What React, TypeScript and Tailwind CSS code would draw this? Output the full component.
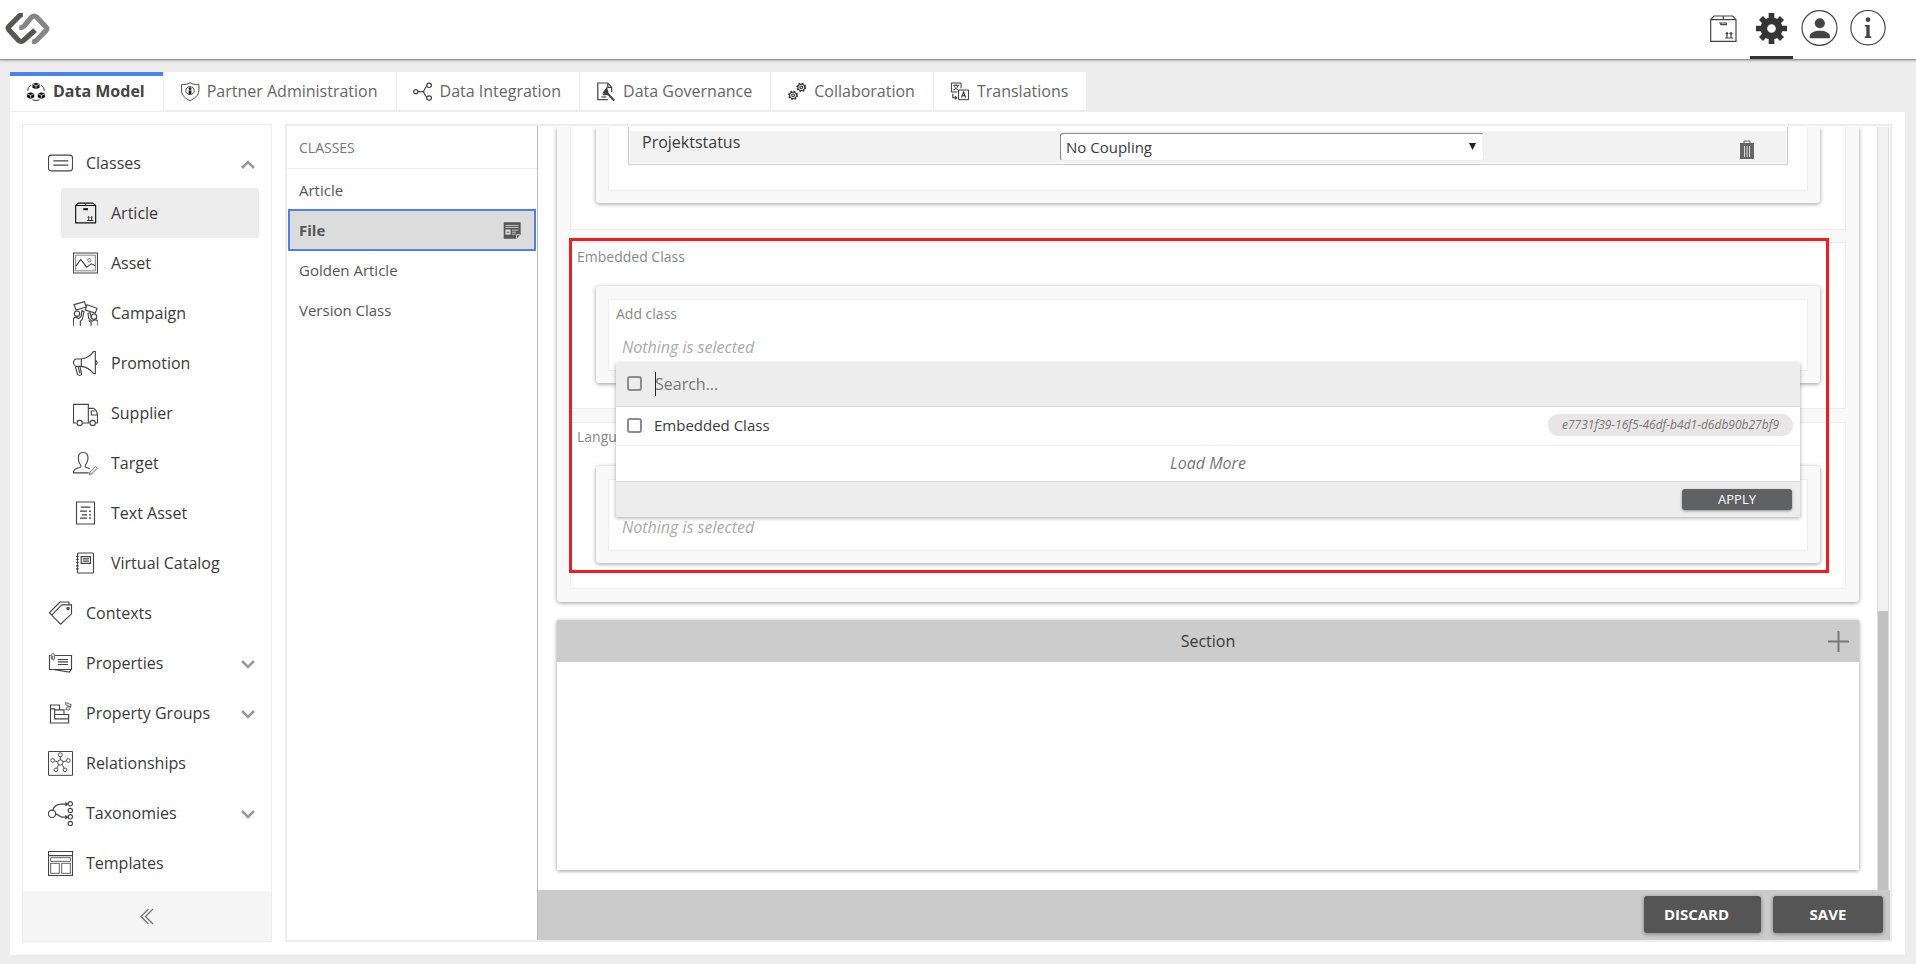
import type { ReactNode } from "react";

type IconProps = { box: string; children: ReactNode; className?: string; stroke?: string; width?: number };

function Icon({ box, children, className = "size-[25px]", stroke = "#444", width = 3.4 }: IconProps) {
  return (
    <svg viewBox={box} preserveAspectRatio="none" className={`${className} shrink-0`} fill="none" stroke={stroke} strokeWidth={width} aria-hidden="true">
      {children}
    </svg>
  );
}

function Logo() {
  return (
    <svg viewBox="14 38 126 94" preserveAspectRatio="none" className="h-[31px] w-[45px]" fill="none" strokeLinejoin="round" strokeWidth="15" aria-hidden="true">
      <path d="M64 43Q57 43 53 48L25 79Q21 84 25 89L52 121Q59 127 66 121L98 90" stroke="#555653" />
      <path d="M54 83Q62 83 67 78L88 51Q95 44 102 50L129 81Q133 86 129 91L102 121Q97 126 90 126" stroke="#858585" />
      <path d="M71 45 43 76M81 125 111 92" stroke="#fff" strokeWidth="3" />
    </svg>
  );
}

const boxIcon = (
  <>
    <path d="M227 255 235 248H278L287 255V307H227ZM227 255H287M257 248V255" />
    <path d="M250 266H264" strokeWidth="6" />
    <path d="M262 300H280M266 300V289M275 300V289M263 291 266 288 269 291M272 291 275 288 278 291" strokeWidth="2.5" />
  </>
);

const topNav = [
  {
    name: "Articles",
    active: false,
    icon: (
      <Icon box="148 47 81 81" className="size-[27px]" width={3.6}>
        <path d="M150 61 160 50H216L226 61V126H150ZM150 61H226M188 50V61" />
        <path d="M178 71H197V76H181Z" />
        <path d="M193 116H217M199 115V101M211 115V101M195 104 199 100 203 104M207 104 211 100 215 104" />
      </Icon>
    ),
  },
  {
    name: "Settings",
    active: true,
    icon: (
      <Icon box="288 39 93 93" className="size-[31px]" stroke="#353535" width={17}>
        <circle cx="334.500" cy="85.500" r="23" strokeWidth="20" />
        <path d="M334.500 39V57M334.500 114V132M288 85.500H306M363 85.500H381M303 54 314 65M355 106 366 117M303 117 314 106M355 65 366 54" />
      </Icon>
    ),
  },
  {
    name: "Account",
    active: false,
    icon: (
      <Icon box="424 29 110 108" className="h-9 w-[37px]">
        <circle cx="479" cy="83" r="52" />
        <circle cx="480" cy="69" r="15" fill="#444" stroke="none" />
        <path d="M450 114V108C450 97 465 91 480 91S510 97 510 108V114Z" fill="#444" stroke="none" />
      </Icon>
    ),
  },
  {
    name: "Information",
    active: false,
    icon: (
      <Icon box="573 28 108 108" className="size-9">
        <circle cx="627" cy="81" r="51.500" />
        <circle cx="627" cy="57" r="7" fill="#444" stroke="none" />
        <path d="M617 73H632V106L637 108V112H617V108L622 106V78L617 76Z" fill="#444" stroke="none" />
      </Icon>
    ),
  },
];

function Cube({ x, y }: { x: number; y: number }) {
  return (
    <g transform={`translate(${x} ${y})`}>
      <path d="M0-10 10-6V5L0 10-10 5V-6Z" fill="#111" stroke="none" />
      <path d="M-9-5 0-1 9-5M0-1V9" stroke="#fff" strokeWidth="2" />
    </g>
  );
}

function Cog({ x, y }: { x: number; y: number }) {
  return (
    <g transform={`translate(${x} ${y})`}>
      <circle r="11.500" strokeWidth="5" strokeDasharray="5 4" />
      <circle r="9.500" strokeWidth="3" />
      <circle r="4" strokeWidth="3" />
    </g>
  );
}

const tabIcon = "h-[19px] w-5";

const tabs = [
  {
    name: "Data Model",
    active: true,
    icon: (
      <Icon box="70 244 56 57" className={tabIcon} stroke="#111" width={2.5}>
        <path d="M84 253C78 257 75 263 75 270M112 253C118 257 121 263 121 270M88 297C94 300 102 300 108 297" />
        <Cube x={98} y={256} />
        <Cube x={83} y={285} />
        <Cube x={113} y={285} />
      </Icon>
    ),
  },
  {
    name: "Partner Administration",
    active: false,
    icon: (
      <Icon box="495 244 56 57" className={tabIcon} width={2.8}>
        <path d="M523 246C516 251 508 252 499 252V270C500 285 511 294 523 300 535 294 547 285 548 270V252C539 252 530 251 523 246Z" />
        <circle cx="523" cy="270" r="12" />
        <circle cx="523" cy="264" r="4" fill="#222" stroke="none" />
        <path d="M519 269H527V280H519Z" fill="#222" stroke="none" />
      </Icon>
    ),
  },
  {
    name: "Data Integration",
    active: false,
    icon: (
      <Icon box="1152 244 56 57" className={tabIcon}>
        <circle cx="1160" cy="273" r="6" />
        <circle cx="1197" cy="254" r="6.500" />
        <circle cx="1197" cy="292" r="6.500" />
        <path d="M1166 273H1179M1191 257C1183 261 1186 272 1179 273 1186 274 1183 285 1191 289" />
      </Icon>
    ),
  },
  {
    name: "Data Governance",
    active: false,
    icon: (
      <Icon box="157 65 56 57" className={tabIcon}>
        <path d="M201 96V81L190 68H162V118H190M190 68V81H201" />
        <path d="M187 83 177 98 191 100ZM176 103H193" fill="#333" />
        <path d="M190 100 208 121" strokeWidth="6" />
        <path d="M172 110H186" />
      </Icon>
    ),
  },
  {
    name: "Collaboration",
    active: false,
    icon: (
      <Icon box="694 64 56 57" className={tabIcon} stroke="#333">
        <Cog x={734} y={80} />
        <Cog x={711} y={104} />
      </Icon>
    ),
  },
  {
    name: "Translations",
    active: false,
    icon: (
      <Icon box="1151 65 56 57" className={tabIcon} stroke="#333" width={2.8}>
        <path d="M1182 84V68H1155V95H1172M1175 89H1203V118H1175Z" />
        <path d="M1160 75H1177M1168 72V75M1174 76C1171 83 1166 87 1160 89M1163 78C1166 84 1171 88 1175 89" />
        <path d="M1183 112 1189 95 1195 112M1185 106H1193M1159 100V112H1170M1165 107 1170 112 1165 117" strokeWidth="3" />
      </Icon>
    ),
  },
];

type NavItem = { name: string; icon: ReactNode; chevron?: "up" | "down"; nested?: boolean; active?: boolean };

const navItems: NavItem[] = [
  {
    name: "Classes",
    chevron: "up",
    icon: (
      <Icon box="144 91.5 75 75">
        <rect x="145.500" y="104" width="72" height="47" rx="8" />
        <path d="M160 121H205M160 134H205" />
      </Icon>
    ),
  },
  {
    name: "Article",
    nested: true,
    active: true,
    icon: (
      <Icon box="219 241.5 75 75" stroke="#111">
        {boxIcon}
      </Icon>
    ),
  },
  {
    name: "Asset",
    nested: true,
    icon: (
      <Icon box="219 391.5 75 75">
        <path d="M220.500 397.500H292.500V457.500H220.500Z" />
        <path d="M227 404H286V451H227Z" strokeWidth="2" />
        <path d="M228 437 242 417 260 440 274 430 286 436" />
        <circle cx="268" cy="419" r="5" strokeWidth="2" />
      </Icon>
    ),
  },
  {
    name: "Campaign",
    nested: true,
    icon: (
      <Icon box="219 540 75 75">
        <path d="M222 551 253 542 259 558 228 567ZM261 551 291 562 286 576 256 567Z" />
        <circle cx="231" cy="578" r="8" />
        <circle cx="282" cy="587" r="8" />
        <path d="M220 614V593C223 588 229 588 235 593L243 587 246 569 252 572 247 595 241 601V614M294 614V601C290 595 282 597 276 601L266 592 264 577 270 575 274 590M266 598 273 604V614" />
      </Icon>
    ),
  },
  {
    name: "Promotion",
    nested: true,
    icon: (
      <Icon box="219 690 75 75">
        <path d="M244 714H228C218 716 218 732 228 736H244ZM244 714C262 712 271 705 281 691H286V758H281C271 745 262 738 244 736M286 718C293 720 293 730 286 732M226 737 233 761C236 764 242 763 245 760L240 737M234 737 240 757" />
      </Icon>
    ),
  },
  {
    name: "Supplier",
    nested: true,
    icon: (
      <Icon box="219 -30 75 75">
        <path d="M229 36H220.500V-20H265V36H247M265 -8H280C287 -7 292 5 292.500 14V36H287M268 36H265M292 12H274V0H284" />
        <circle cx="239" cy="36" r="8" />
        <circle cx="278" cy="36" r="8" />
      </Icon>
    ),
  },
  {
    name: "Target",
    nested: true,
    icon: (
      <Icon box="219 121.500 75 75">
        <path d="M266 187H220.500C220 180 224 176 229 174L239 171C245 169 243 165 239 159 236 154 235 149 235 143 235 132 240 126 249 126S264 132 264 143C264 149 262 154 259 159 255 165 254 169 259 171L270 174" />
        <path d="M270 185 287 168 292 173 275 190 268 192Z" strokeWidth="2.500" />
      </Icon>
    ),
  },
  {
    name: "Text Asset",
    nested: true,
    icon: (
      <Icon box="219 271.500 75 75">
        <path d="M229.500 274.500H283.500V340.500H229.500Z" />
        <path d="M242 290H271M240 302H261M246 313H261M240 323H261M267 302H273M267 313H273M267 323H273" />
      </Icon>
    ),
  },
  {
    name: "Virtual Catalog",
    nested: true,
    icon: (
      <Icon box="219 421.500 75 75">
        <rect x="232.500" y="427.500" width="48" height="60" rx="3" />
        <path d="M243.500 438.500H271.500V458.500H243.500ZM248 445H267M248 452H267M228 438H236M228 447H236M228 456H236M228 466H236M228 475H236" />
      </Icon>
    ),
  },
  {
    name: "Contexts",
    icon: (
      <Icon box="144 571.500 75 75">
        <path d="M185 583H214.500V610L182 641 148 607 180 574.500H207V583M185 583 156 613" />
        <circle cx="204" cy="594" r="3.500" fill="#777" />
      </Icon>
    ),
  },
  {
    name: "Properties",
    icon: (
      <Icon box="144 721.500 75 75">
        <path d="M165 735H214.500V777H148.500V735H152M160 777 208 785 213 778M174 747H204M174 754H204M174 762H204" />
        <path d="M155 747V732C156 728 162 728 163 732V746C161 749 158 749 158 746V736" strokeWidth="2.500" />
      </Icon>
    ),
  },
  {
    name: "Property Groups",
    icon: (
      <Icon box="144 31.500 75 75">
        <path d="M151.500 97.500V43.500H178.500V58H192V72H206V97.500ZM151 55H164V85H206M164 72H192M164 58H178" />
        <path d="M197 36 214 43 211 49 197 43ZM201 50 212 48 207 59 197 57Z" strokeWidth="2.500" />
      </Icon>
    ),
  },
  {
    name: "Relationships",
    icon: (
      <Icon box="144 181.500 75 75" width={2.8}>
        <path d="M145.500 183H217.500V254.500H145.500Z" strokeWidth="3" />
        <circle cx="181" cy="216" r="8" />
        <circle cx="181" cy="193" r="6" />
        <circle cx="158" cy="210" r="5.500" />
        <circle cx="205" cy="210" r="5.500" />
        <circle cx="168" cy="238" r="5.500" />
        <circle cx="195" cy="238" r="5.500" />
        <path d="M181 199V208M164 211 173 214M199 211 189 214M171 233 176 223M192 233 187 223" />
      </Icon>
    ),
  },
  {
    name: "Taxonomies",
    chevron: "down",
    icon: (
      <Icon box="144 329.500 75 75">
        <circle cx="156" cy="368" r="11" />
        <path d="M158 357C163 343 172 339 184 339H203M166 368C176 369 178 378 190 378H203M196 334 203 339 196 344M196 373 203 378 196 383" />
        <circle cx="211" cy="338" r="6.500" />
        <circle cx="211" cy="358" r="6.500" />
        <circle cx="211" cy="377" r="6.500" />
        <circle cx="211" cy="397" r="6.500" />
      </Icon>
    ),
  },
  {
    name: "Templates",
    icon: (
      <Icon box="144 480 75 75">
        <path d="M145.500 481.500H217.500V553.500H145.500ZM145 494H218" />
        <path d="M152 500H211V511H152ZM152 517H178V547H152ZM185 517H211V547H185Z" strokeWidth="2.500" />
      </Icon>
    ),
  },
];

const expandable = ["Properties", "Property Groups", "Taxonomies"];

function Chevron({ up }: { up: boolean }) {
  return (
    <svg viewBox="0 0 14 9" className="mt-0.5 h-[9px] w-3.5" fill="none" stroke="#999" strokeWidth="2.600" aria-hidden="true">
      <path d={up ? "M1 8 7 2 13 8" : "M1 1 7 7 13 1"} />
    </svg>
  );
}

function Sidebar() {
  return (
    <nav className="flex w-[250px] shrink-0 flex-col border border-[#ededed]">
      <ul className="flex flex-1 flex-col pt-[13px]">
        {navItems.map((item) => (
          <li key={item.name} className={item.nested ? "pr-3 pl-[38px]" : "pr-4 pl-[25px]"}>
            <a
              href="#"
              className={`flex h-[50px] items-center gap-[13px] rounded-[3px] ${item.nested ? "pl-3" : ""} ${item.active ? "bg-[#ededed]" : ""}`}
            >
              {item.icon}
              <span className="flex-1">{item.name}</span>
              {item.chevron === "up" && <Chevron up />}
              {expandable.includes(item.name) && <Chevron up={false} />}
            </a>
          </li>
        ))}
      </ul>
      <button type="button" aria-label="Collapse sidebar" className="flex h-[50px] items-center justify-center bg-[#f5f5f5]">
        <svg viewBox="0 0 14 17" className="h-[17px] w-3.5" fill="none" stroke="#777" strokeWidth="1.400" aria-hidden="true">
          <path d="M8.500 1 1 8.500 8.500 16M13 1 5.500 8.500 13 16" />
        </svg>
      </button>
    </nav>
  );
}

function ClassList() {
  return (
    <section className="flex w-[251px] shrink-0 flex-col border-r border-[#bbb] text-[15px]">
      <h2 className="flex h-[43px] items-center border-b border-[#ededed] pt-0.5 pl-3 text-sm text-[#777]">CLASSES</h2>
      <ul className="flex flex-col pt-px text-[#555]">
        {["Article", "File", "Golden Article", "Version Class"].map((name) =>
          name === "File" ? (
            <li key={name} className="h-10 px-px">
              <a href="#" className="-my-px flex h-[42px] items-center justify-between border-2 border-[#4f80ee] bg-[#dcdcdc] pr-[13px] pl-[9px] font-bold">
                File
                <Icon box="700 335 52 50" className="h-[17px] w-[18px]" stroke="#555">
                  <path d="M702 336H751V371L739 384H702Z" fill="#555" stroke="none" />
                  <path d="M707 345H745M707 351H745M726 359H745M726 365H738M726 371H736" stroke="#ddd" strokeWidth="2.500" />
                  <path d="M707 357H722V372H707Z" fill="#ddd" stroke="none" />
                  <path d="M711 365H718" />
                  <path d="M739 383V372H750" stroke="#ddd" strokeWidth="2.500" />
                </Icon>
              </a>
            </li>
          ) : (
            <li key={name}>
              <a href="#" className="flex h-10 items-center pl-3">
                {name}
              </a>
            </li>
          ),
        )}
      </ul>
    </section>
  );
}

function CouplingTable() {
  return (
    <div className="border border-t-0 border-[#ccc] p-px pt-1">
      <table className="w-full table-fixed border-collapse bg-[#f2f2f2]">
        <colgroup>
          <col className="w-[37.2%]" />
          <col className="w-[36.7%]" />
          <col />
        </colgroup>
        <tbody>
          <tr className="h-8">
            <td className="pb-2.5 pl-3 align-middle leading-5">
              <label htmlFor="coupling">Projektstatus</label>
            </td>
            <td>
              <div className="relative">
                <select
                  id="coupling"
                  className="block h-7 w-full appearance-none rounded-[3px] border border-t-[#888] border-r-[#eee] border-b-[#eee] border-l-[#888] bg-white pl-[5px] text-[15px]"
                >
                  <option>No Coupling</option>
                </select>
                <svg viewBox="0 0 8 8" className="pointer-events-none absolute top-2.5 right-2 size-[7px]" fill="#222" aria-hidden="true">
                  <path d="M0 0H8L4 8Z" />
                </svg>
              </div>
            </td>
            <td className="pr-[31px]">
              <button type="button" aria-label="Delete" className="ml-auto block pt-1.5">
                <svg viewBox="0 0 16 20" className="h-5 w-4" fill="none" stroke="#666" aria-hidden="true">
                  <path d="M1 3H15V19H1Z" fill="#666" stroke="none" />
                  <path d="M5 3V1H11V3" />
                  <path d="M5.500 6V17M8 6V17M10.500 6V17" stroke="#ddd" />
                </svg>
              </button>
            </td>
          </tr>
        </tbody>
      </table>
    </div>
  );
}

const checkbox = "size-[15px] shrink-0 appearance-none rounded-[3px] border-2 border-[#8c8c8c] bg-transparent";

function ClassDropdown() {
  return (
    <div className="absolute inset-x-0 top-full z-10 bg-white shadow-[0_1px_4px_rgba(0,0,0,0.35)]">
      <div className="flex h-11 items-center border-b border-[#d8d8d8] bg-[#ededed] pb-0.5 pl-[11px]">
        <input type="checkbox" aria-label="Select all" className={checkbox} />
        <div className="relative ml-3 flex-1">
          <input type="text" aria-label="Search" placeholder="Search..." className="block w-full bg-transparent pl-px text-base leading-6 placeholder:text-[#777]" />
          <span className="absolute inset-y-0 left-px w-px bg-[#222]" />
        </div>
      </div>
      <div className="flex h-[39px] items-center border-b border-[#ededed] pr-[7px] pb-0.5 pl-[11px]">
        <input id="embedded" type="checkbox" className={checkbox} />
        <label htmlFor="embedded" className="ml-3 flex-1 text-[15px]">
          Embedded Class
        </label>
        <span className="rounded-full bg-[#e8e6e6] px-3.5 text-xs leading-[22px] text-[#777] italic">e7731f39-16f5-46df-b4d1-d6db90b27bf9</span>
      </div>
      <button type="button" className="flex h-9 w-full items-center justify-center border-b border-[#d8d8d8] pb-0.5 text-[#777] italic">
        Load More
      </button>
      <div className="flex h-[35px] items-center justify-end bg-[#ededed] pr-2">
        <button type="button" className="h-[21px] w-[110px] rounded-[3px] bg-[#606165] text-[13px] leading-[21px] text-white shadow-[0_1px_3px_rgba(0,0,0,0.4)]">
          APPLY
        </button>
      </div>
    </div>
  );
}

const cardShadow = "shadow-[0_1px_4px_rgba(0,0,0,0.4)]";

function Panel({ title, label, children }: { title: string; label?: string; children?: ReactNode }) {
  return (
    <div className="border border-[#ededed] bg-white px-[25px] pb-[25px]">
      <h3 className="-ml-[19px] h-[43px] pt-1 text-sm leading-5 text-[#888]">{title}</h3>
      <div className={`rounded-[3px] bg-[#f9f9f9] px-3 pt-[13px] pb-3 ${cardShadow}`}>
        <div className="border border-[#ededed] bg-white px-[7px] pt-1 pb-[7px]">
          <div className="relative">
            <div className="h-[27px] text-sm leading-5 text-[#888]">{label}</div>
            <div className="pl-1.5 leading-8 text-[#aaa] italic">Nothing is selected</div>
            {children}
          </div>
        </div>
      </div>
    </div>
  );
}

function Content() {
  return (
    <div className="flex min-w-0 flex-1 flex-col">
      <div className="flex min-h-0 flex-1 overflow-hidden pt-px pr-px">
        <div className="flex min-w-0 flex-1 flex-col overflow-hidden pr-[18px] pl-[19px]">
          <div className={`rounded-b-[3px] bg-[#f9f9f9] px-[13px] pb-[13px] ${cardShadow}`}>
            <div className="mb-3 border border-t-0 border-[#ededed] bg-white px-[25px] pb-[26px]">
              <div className={`rounded-b-[3px] bg-[#f9f9f9] px-3 pb-3 ${cardShadow}`}>
                <div className="border border-t-0 border-[#ededed] bg-white px-[19px] pb-[25px]">
                  <CouplingTable />
                </div>
              </div>
            </div>
            <div className="relative flex flex-col gap-[13px]">
              <Panel title="Embedded Class" label="Add class">
                <ClassDropdown />
              </Panel>
              <Panel title="Language" />
              <div className="pointer-events-none absolute -top-1 right-[17px] bottom-4 -left-px z-20 border-3 border-[#ee1c25]" />
            </div>
          </div>
          <div className={`mt-[18px] mb-5 flex min-h-[250px] flex-col bg-white ${cardShadow}`}>
            <div className="grid h-[42px] grid-cols-[1fr_auto_1fr] items-center bg-[#ccc] pr-2.5">
              <h3 className="col-start-2 pl-2.5">Section</h3>
              <button type="button" aria-label="Add section" className="justify-self-end">
                <svg viewBox="0 0 21 21" className="block size-[21px]" stroke="#777" strokeWidth="2" aria-hidden="true">
                  <path d="M10.500 0V21M0 10.500H21" />
                </svg>
              </button>
            </div>
          </div>
        </div>
        <div className="flex w-3 flex-col justify-end border-x border-[#ddd] bg-[#f1f1f1]">
          <div className="h-[36.600%] bg-[#c1c1c1]" />
        </div>
      </div>
      <footer className="flex h-[50px] shrink-0 items-start justify-end gap-3 bg-[#cbcbcb] pt-1.5 pr-[7px] text-[15px] font-bold text-white">
        <button type="button" className={`h-[37px] w-[117px] rounded-[3px] bg-[#555] pr-3 ${cardShadow}`}>
          DISCARD
        </button>
        <button type="button" className={`h-[37px] w-[110px] rounded-[3px] bg-[#555] ${cardShadow}`}>
          SAVE
        </button>
      </footer>
    </div>
  );
}

export default function App() {
  return (
    <div className="flex h-screen flex-col bg-[#ededed] font-['Open_Sans','Noto_Sans',sans-serif] text-base text-[#3a3a3a]">
      <header className="flex h-[60px] shrink-0 items-stretch justify-between border-b border-[#999] bg-white pr-[27px] pl-[5px] shadow-[0_1px_2px_rgba(0,0,0,0.25)]">
        <a href="#" aria-label="Home" className="flex items-center pb-0.5">
          <Logo />
        </a>
        <nav className="flex gap-[5px]">
          {topNav.map((item) => (
            <button
              key={item.name}
              type="button"
              aria-label={item.name}
              className={`flex w-[43px] items-center justify-center border-b-3 ${item.active ? "border-[#353535]" : "border-transparent"}`}
            >
              {item.icon}
            </button>
          ))}
        </nav>
      </header>
      <div className="flex min-h-0 flex-1 flex-col pt-3 pr-[11px] pb-[9px] pl-2.5">
        <nav className="flex h-10 gap-px pb-0.5">
          {tabs.map((tab) => (
            <a
              key={tab.name}
              href="#"
              className={`flex items-center gap-[7px] bg-white pr-[18px] pl-4 ${
                tab.active ? "-mb-px border-t-4 border-[#4f80ee] pb-[5px] font-bold text-[#444]" : "text-[#666]"
              }`}
            >
              {tab.icon}
              {tab.name}
            </a>
          ))}
        </nav>
        <main className="flex min-h-0 flex-1 gap-[13px] bg-white pt-3 pr-[13px] pb-[13px] pl-3">
          <Sidebar />
          <div className="flex min-w-0 flex-1 border-2 border-[#ededed]">
            <ClassList />
            <Content />
          </div>
        </main>
      </div>
    </div>
  );
}
